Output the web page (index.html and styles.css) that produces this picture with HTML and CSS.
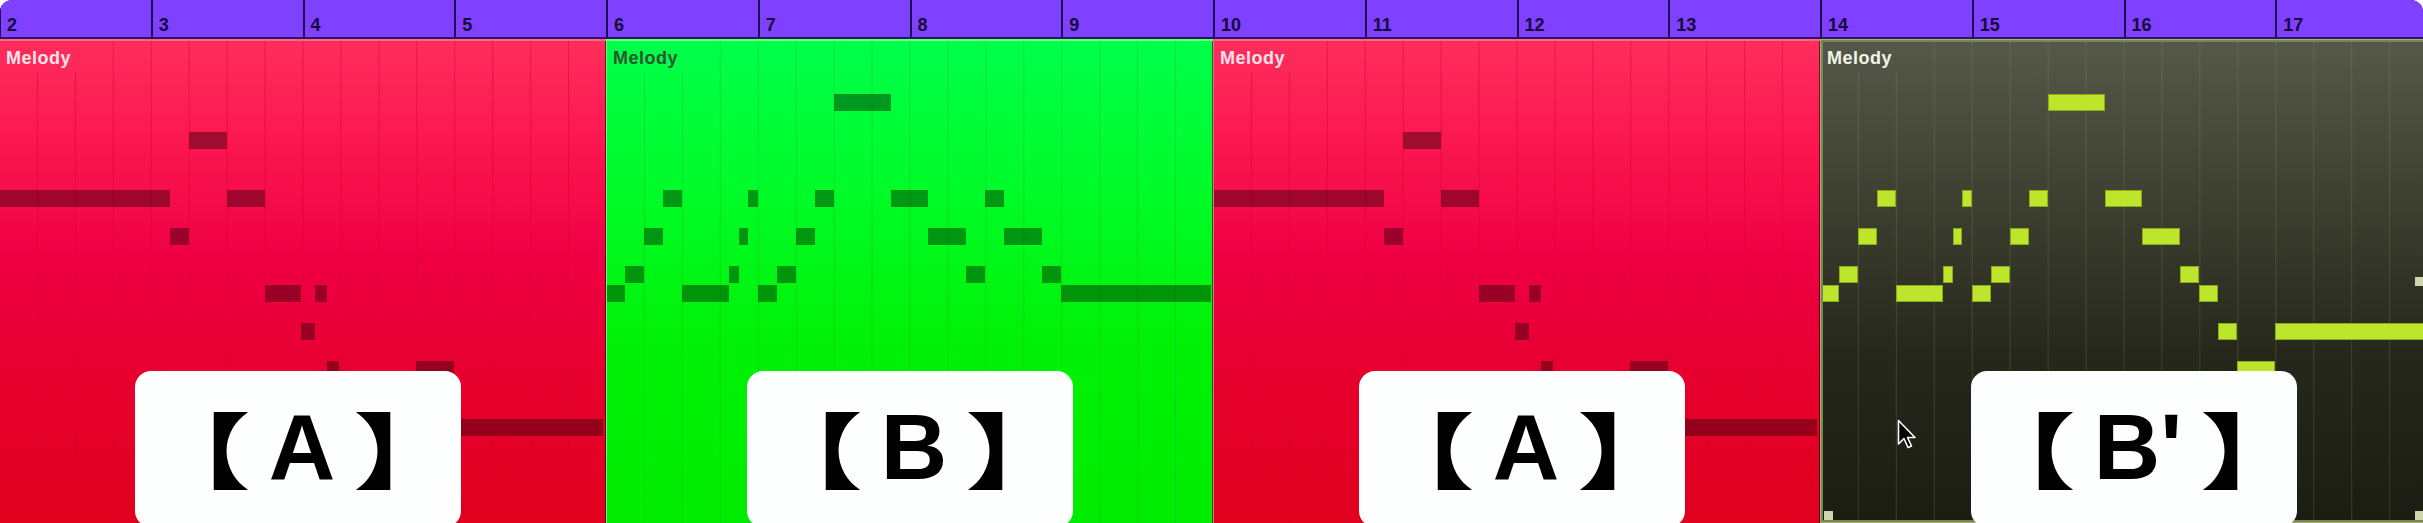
FILE: index.html
```html
<!DOCTYPE html>
<html lang="en">
<head>
    <meta charset="UTF-8">
    <title>Arrangement - Melody</title>
    <link rel="stylesheet" href="styles.css">
</head>
<body>
    <div class="arrange">
        <div class="ruler">
            <div class="bar">2</div>
            <div class="bar">3</div>
            <div class="bar">4</div>
            <div class="bar">5</div>
            <div class="bar">6</div>
            <div class="bar">7</div>
            <div class="bar">8</div>
            <div class="bar">9</div>
            <div class="bar">10</div>
            <div class="bar">11</div>
            <div class="bar">12</div>
            <div class="bar">13</div>
            <div class="bar">14</div>
            <div class="bar">15</div>
            <div class="bar">16</div>
            <div class="bar">17</div>
        </div>

        <div class="lane">
            <div class="clip clip-red" data-part="A">
                <div class="grid"></div>
                <div class="notes"></div>
                <span class="clip-name">Melody</span>
            </div>
            <div class="clip clip-green" data-part="B">
                <div class="grid"></div>
                <div class="notes"></div>
                <span class="clip-name">Melody</span>
            </div>
            <div class="clip clip-red" data-part="A">
                <div class="grid"></div>
                <div class="notes"></div>
                <span class="clip-name">Melody</span>
            </div>
            <div class="clip clip-dark selected" data-part="B2">
                <div class="grid"></div>
                <div class="notes"></div>
                <span class="clip-name">Melody</span>
                <span class="handle handle-bl"></span>
                <span class="handle handle-r"></span>
                <span class="handle handle-br"></span>
                <svg class="cursor" width="20" height="32" viewBox="0 0 20 32">
                    <path d="M1.5 1.5 V25 L7 19.5 L11 28.5 L14.5 27 L10.5 18.5 H18 Z" fill="#000" stroke="#fff" stroke-width="1.6" stroke-linejoin="round"/>
                </svg>
            </div>
        </div>

        <div class="captions">
            <div class="caption"><span class="br">【</span><span class="ch">A</span><span class="br">】</span></div>
            <div class="caption"><span class="br">【</span><span class="ch">B</span><span class="br">】</span></div>
            <div class="caption"><span class="br">【</span><span class="ch">A</span><span class="br">】</span></div>
            <div class="caption"><span class="br">【</span><span class="ch">B'</span><span class="br">】</span></div>
        </div>
    </div>

    <script>
        // 16 sixteenths per bar, one bar = 151.75px
        const SIXTEENTH = 151.75 / 16;
        const ROW_TOP = 55;
        const ROW_STEP = 19.1;

        // [row, start, end] in sixteenths from the clip start
        const parts = {
            A: [
                [2, 20, 24],
                [5, 0, 18], [5, 24, 28],
                [7, 18, 20],
                [10, 28, 31.8], [10, 33.3, 34.6],
                [12, 31.8, 33.3],
                [14, 34.6, 35.9], [14, 44, 48],
                [17, 48, 63.7]
            ],
            B: [
                [0, 24, 30],
                [5, 6, 8], [5, 15, 16], [5, 22, 24], [5, 30, 34], [5, 40, 42],
                [7, 4, 6], [7, 14, 15], [7, 20, 22], [7, 34, 38], [7, 42, 46],
                [9, 2, 4], [9, 13, 14], [9, 18, 20], [9, 38, 40], [9, 46, 48],
                [10, 0, 2], [10, 8, 13], [10, 16, 18], [10, 48, 63.8]
            ],
            B2: [
                [0, 24, 30],
                [5, 6, 8], [5, 15, 16], [5, 22, 24], [5, 30, 34],
                [7, 4, 6], [7, 14, 15], [7, 20, 22], [7, 34, 38],
                [9, 2, 4], [9, 13, 14], [9, 18, 20], [9, 38, 40],
                [10, 0, 2], [10, 8, 13], [10, 16, 18], [10, 40, 42],
                [12, 42, 44], [12, 48, 64],
                [14, 44, 48]
            ]
        };

        document.querySelectorAll('.clip').forEach(clip => {
            const box = clip.querySelector('.notes');
            parts[clip.dataset.part].forEach(([row, start, end]) => {
                const note = document.createElement('div');
                note.className = 'note';
                note.style.top = (ROW_TOP + row * ROW_STEP) + 'px';
                note.style.left = (start * SIXTEENTH) + 'px';
                note.style.width = ((end - start) * SIXTEENTH) + 'px';
                box.appendChild(note);
            });
        });
    </script>
</body>
</html>
```

FILE: styles.css
```css
body {
    margin: 0;
    width: 2423px;
    height: 523px;
    overflow: hidden;
    background-color: #fff;
    font-family: "Liberation Sans", Arial, sans-serif;
}
.arrange {
    position: relative;
    height: 523px;
    border-radius: 12px 12px 0 0;
    overflow: hidden;
    background-color: #1b1b1b;
}

/* bar ruler */
.ruler {
    display: flex;
    height: 37px;
    margin-left: -1px;
    background-color: #8040ff;
    border-bottom: 2px solid #2a1466;
}
.bar {
    flex: none;
    width: 151.75px;
    box-sizing: border-box;
    border-left: 2px solid #1d0d52;
    padding: 15px 0 0 6px;
    font-size: 18px;
    font-weight: bold;
    color: #150a3e;
}

/* clips */
.lane {
    display: flex;
    height: 484px;
    margin-left: -1px;
}
.clip {
    position: relative;
    flex: none;
    width: 607px;
    height: 100%;
}
.clip::after {
    content: '';
    position: absolute;
    inset: 0;
    box-shadow: inset 0 2px 0 var(--edge), inset 1px 0 0 var(--edge), inset -1px 0 0 rgba(0, 0, 0, 0.55);
    pointer-events: none;
}
.clip-red {
    background: linear-gradient(#ff2e5c, #fb1650 22%, #ef0044 45%, #e6002e 70%, #e1001d);
    --line: rgba(215, 0, 45, 0.5);
    --edge: #ff6684;
    --note: rgba(50, 0, 12, 0.45);
    --name: #ffe4ea;
}
.clip-green {
    background: linear-gradient(#00ff4c, #00fc2a 30%, #00f208 60%, #00ec00);
    --line: rgba(0, 150, 20, 0.25);
    --edge: #66ff7a;
    --note: rgba(0, 40, 0, 0.47);
    --name: #2a5530;
}
.clip-dark {
    background: linear-gradient(#56584a, #3c3e30 35%, #26281c 65%, #1b1d12);
    --line: rgba(160, 170, 100, 0.2);
    --edge: #a6ae72;
    --note: #bde52c;
    --name: #f2f4e6;
}
.clip.selected::after {
    box-shadow: inset 0 0 0 1px #a6ae72, inset 0 0 0 3px #7c8456;
}

/* beat lines, kept clear of the name at the top left */
.grid::before,
.grid::after {
    content: '';
    position: absolute;
    background: linear-gradient(to right, var(--line) 0 1px, transparent 1px) 0 0 / 37.9375px 100% repeat-x;
}
.grid::before {
    left: 0;
    right: 0;
    top: 33px;
    bottom: 0;
}
.grid::after {
    left: 100px;
    right: 0;
    top: 0;
    height: 33px;
    background-position: -100px 0;
}

.notes {
    position: absolute;
    inset: 0;
}
.note {
    position: absolute;
    height: 17px;
    background: var(--note);
}
.clip-dark .note {
    box-shadow: inset 0 0 0 1px rgba(80, 100, 0, 0.45);
}

.clip-name {
    position: absolute;
    left: 7px;
    top: 9px;
    font-size: 18px;
    font-weight: bold;
    letter-spacing: 0.5px;
    color: var(--name);
}

.handle {
    position: absolute;
    width: 9px;
    height: 9px;
    background-color: #cfd6ae;
    z-index: 2;
}
.handle-bl { left: 4px; top: 472px; }
.handle-r { left: 595px; top: 238px; }
.handle-br { left: 595px; top: 472px; }

.cursor {
    position: absolute;
    left: 77px;
    top: 380px;
    z-index: 3;
}

/* section captions */
.captions {
    position: absolute;
    left: 0;
    top: 371px;
    display: flex;
    gap: 286px;
    padding-left: 135px;
}
.caption {
    display: flex;
    align-items: center;
    justify-content: center;
    width: 326px;
    height: 156px;
    box-sizing: border-box;
    padding: 0 0 4px 8px;
    border-radius: 16px;
    background-color: #fdfefe;
    color: #000;
}
.ch {
    font: bold 92px/1 "Liberation Sans", Arial, sans-serif;
    margin: 0 31px;
}
.br {
    font: 900 82px/1 "Noto Sans CJK JP", sans-serif;
    transform: scaleX(1.3);
}
```
